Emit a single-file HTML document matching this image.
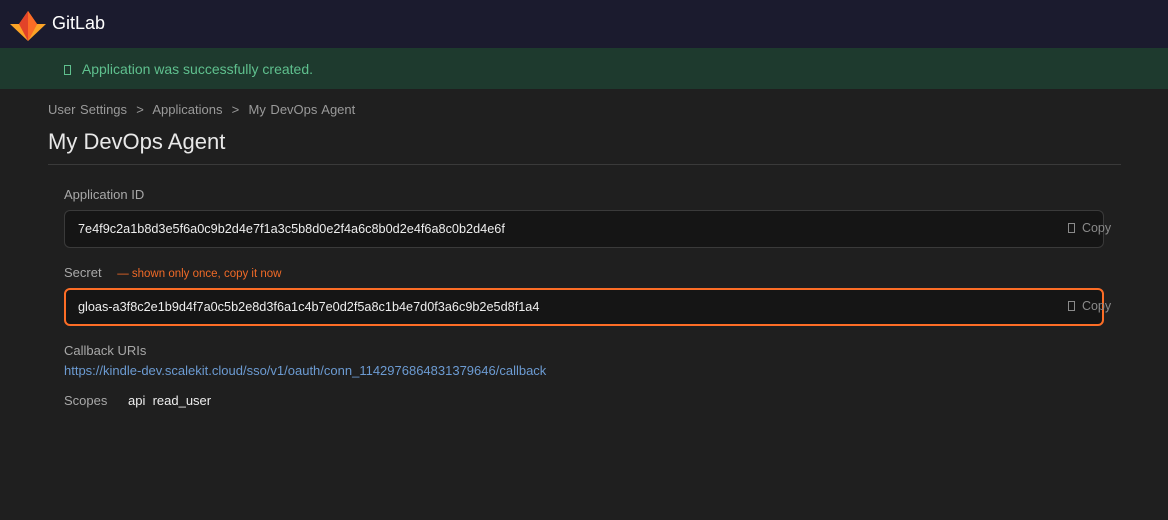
<!DOCTYPE html>
<html><head><meta charset="utf-8"><style>
body{margin:0;width:1168px;height:520px;background:#1f1f1f;font-family:"Liberation Sans",sans-serif;overflow:hidden;position:relative}
.hdr{position:absolute;left:0;top:0;width:1168px;height:48px;background:#1b1b2e}
.hdr .t{position:absolute;left:52px;top:13px;color:#fff;font-size:18px}
.ban{position:absolute;left:0;top:48px;width:1168px;height:41px;background:#1e3a2e;color:#5fc08e;font-size:14px}
.tofu{display:inline-block;width:7px;height:10px;border:1px solid currentColor;box-sizing:border-box;vertical-align:-1px}
.a{position:absolute}
.crumb{left:48px;top:102px;color:#9a9a9a;font-size:13px;word-spacing:1px}
.h1{left:48px;top:129px;color:#e8e8e8;font-size:22px}
.hr{left:48px;top:164px;width:1073px;height:1px;background:#3a3a3a}
.lbl{color:#a8a8a8;font-size:13px}
.box{left:64px;width:1040px;height:38px;box-sizing:border-box;background:#151515;border:1px solid #3a3a3a;border-radius:6px;color:#eee;font-size:12.7px;line-height:36px;padding-left:13px}
.copy{position:absolute;left:1068px;color:#8a8a8a;font-size:12.5px}
</style></head><body>
<div class="hdr">
<svg class="a" style="left:0;top:0" width="50" height="48"><polygon points="28,11 37,24 46,24 28,41 10,24 19,24" fill="#fca326"/><polygon points="28,11 37,24 28,41 19,24" fill="#e24329"/><polygon points="28,11 37,24 28,41" fill="#fc6d26"/></svg>
<div class="t">GitLab</div></div>
<div class="ban"><span class="a" style="left:64px;top:13px"><span class="tofu"></span>&nbsp;&nbsp; Application was successfully created.</span></div>
<div class="a crumb">User Settings &nbsp;&gt;&nbsp; Applications &nbsp;&gt;&nbsp; My DevOps Agent</div>
<div class="a h1">My DevOps Agent</div>
<div class="a hr"></div>
<div class="a lbl" style="left:64px;top:187px">Application ID</div>
<div class="a box" style="top:210px">7e4f9c2a1b8d3e5f6a0c9b2d4e7f1a3c5b8d0e2f4a6c8b0d2e4f6a8c0b2d4e6f</div>
<div class="copy" style="top:221px"><span class="tofu"></span>&nbsp; Copy</div>
<div class="a lbl" style="left:64px;top:265px">Secret <span style="color:#f06a27;font-size:11.5px;margin-left:12px">— shown only once, copy it now</span></div>
<div class="a box" style="top:288px;border:2px solid #fc6d26;line-height:34px;padding-left:12px">gloas-a3f8c2e1b9d4f7a0c5b2e8d3f6a1c4b7e0d2f5a8c1b4e7d0f3a6c9b2e5d8f1a4</div>
<div class="copy" style="top:299px"><span class="tofu"></span>&nbsp; Copy</div>
<div class="a lbl" style="left:64px;top:343px">Callback URIs</div>
<div class="a" style="left:64px;top:363px;color:#6c9bd2;font-size:13px">https://kindle-dev.scalekit.cloud/sso/v1/oauth/conn_1142976864831379646/callback</div>
<div class="a lbl" style="left:64px;top:393px">Scopes</div>
<div class="a" style="left:128px;top:393px;color:#eee;font-size:13px">api&nbsp; read_user</div>
</body></html>
